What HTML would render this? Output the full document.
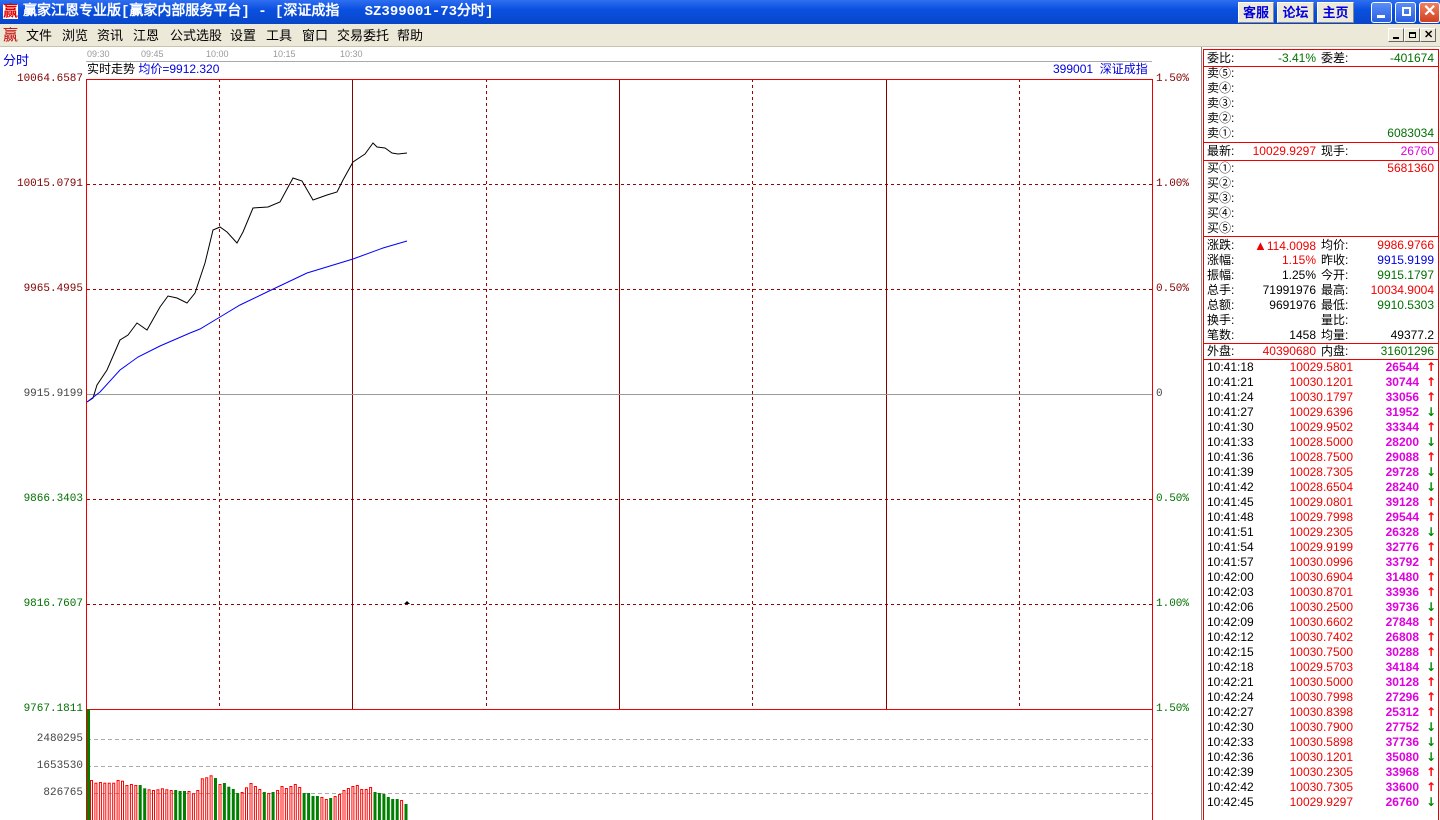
<!DOCTYPE html>
<html><head><meta charset="utf-8">
<style>
*{margin:0;padding:0;box-sizing:border-box}
body{width:1440px;height:820px;overflow:hidden;background:#fff;font-family:"Liberation Sans","WenQuanYi Zen Hei","Noto Sans CJK SC",sans-serif;font-size:12px;position:relative}
.a{position:absolute;white-space:nowrap;line-height:15px}
#title{position:absolute;left:0;top:0;width:1440px;height:24px;background:linear-gradient(#2f6ef0,#0a50e0 40%,#0846c8);color:#fff;font-weight:bold;font-size:14px}
#menu{position:absolute;left:0;top:24px;width:1440px;height:23px;background:#ece9d8;border-bottom:1px solid #c8c4b0}
#menu .a{top:4px;font-size:13px}
.btn{position:absolute;top:2px;height:21px;background:#ece9d8;border:1px solid #fff;border-right-color:#888;border-bottom-color:#888;color:#0000e0;font-size:13px;text-align:center;line-height:19px}
.wb{position:absolute;top:2px;width:21px;height:21px;border:1px solid #fff;border-radius:3px;background:linear-gradient(#5a8ef8,#2a5ee0)}
.sb{position:absolute;top:28px;width:16px;height:14px;background:#ece9d8;border:1px solid #fff;border-right-color:#666;border-bottom-color:#666}
.lab{position:absolute;right:1357px;font-family:"Liberation Mono",monospace;font-size:11px;line-height:12px}
.pct{position:absolute;left:1156px;font-family:"Liberation Mono",monospace;font-size:11px;color:#800000;line-height:12px}
.g{color:#007000}.rd{color:#f00000}.b{color:#0000e0}.m{color:#e000e0}
</style></head><body>
<div id="title">
<span class="a" style="left:3px;top:4px;color:#e00000;font-size:15px;background:#fff;width:15px;height:15px;line-height:15px;text-align:center">赢</span>
<span class="a" style="left:23px;top:4px;line-height:16px;font-family:'Liberation Mono','WenQuanYi Zen Hei',monospace">赢家江恩专业版[赢家内部服务平台] - [深证成指&nbsp;&nbsp;&nbsp;SZ399001-73分时]</span>
<div class="btn" style="left:1238px;width:36px">客服</div>
<div class="btn" style="left:1277px;width:37px">论坛</div>
<div class="btn" style="left:1317px;width:37px">主页</div>
<div class="wb" style="left:1371px"><div style="position:absolute;left:5px;top:12px;width:8px;height:3px;background:#fff"></div></div>
<div class="wb" style="left:1395px"><div style="position:absolute;left:6px;top:4px;width:9px;height:9px;border:2px solid #fff"></div></div>
<div class="wb" style="left:1419px;background:linear-gradient(#f08060,#d04020)"><span class="a" style="left:3px;top:1px;font-size:16px;line-height:16px">✕</span></div>
</div>
<div id="menu">
<span class="a" style="left:3px;color:#c00000;font-size:15px">赢</span>
<span class="a" style="left:26px">文件</span><span class="a" style="left:62px">浏览</span><span class="a" style="left:97px">资讯</span><span class="a" style="left:133px">江恩</span><span class="a" style="left:170px">公式选股</span><span class="a" style="left:230px">设置</span><span class="a" style="left:266px">工具</span><span class="a" style="left:302px">窗口</span><span class="a" style="left:337px">交易委托</span><span class="a" style="left:397px">帮助</span>
</div>
<div class="sb" style="left:1388px;top:28px"><div style="position:absolute;left:4px;top:8px;width:6px;height:2px;background:#000"></div></div>
<div class="sb" style="left:1404px;top:28px"><div style="position:absolute;left:4px;top:3px;width:7px;height:6px;border:1px solid #000;border-top-width:2px"></div></div>
<div class="sb" style="left:1420px;top:28px"><span class="a" style="left:3px;top:-1px;font-weight:bold;font-size:11px">✕</span></div>

<span class="a b" style="left:3px;top:53px;font-size:13px">分时</span>
<span class="a" style="left:87px;top:48px;color:#999;font-size:9px;line-height:12px">09:30</span>
<span class="a" style="left:141px;top:48px;color:#999;font-size:9px;line-height:12px">09:45</span>
<span class="a" style="left:206px;top:48px;color:#999;font-size:9px;line-height:12px">10:00</span>
<span class="a" style="left:273px;top:48px;color:#999;font-size:9px;line-height:12px">10:15</span>
<span class="a" style="left:340px;top:48px;color:#999;font-size:9px;line-height:12px">10:30</span>
<div style="position:absolute;left:86px;top:61px;width:1066px;height:1px;background:#aaa"></div>
<span class="a" style="left:87px;top:62px">实时走势 <span class="b">均价=9912.320</span></span>
<span class="a b" style="left:1053px;top:62px">399001&nbsp;&nbsp;深证成指</span>

<div class="lab" style="top:73px;color:#800000">10064.6587</div>
<div class="lab" style="top:178px;color:#800000">10015.0791</div>
<div class="lab" style="top:283px;color:#800000">9965.4995</div>
<div class="lab" style="top:388px;color:#444">9915.9199</div>
<div class="lab" style="top:493px;color:#007000">9866.3403</div>
<div class="lab" style="top:598px;color:#007000">9816.7607</div>
<div class="lab" style="top:703px;color:#007000">9767.1811</div>
<div class="lab" style="top:733px;color:#444">2480295</div>
<div class="lab" style="top:760px;color:#444">1653530</div>
<div class="lab" style="top:787px;color:#444">826765</div>
<div class="pct" style="top:73px">1.50%</div>
<div class="pct" style="top:178px">1.00%</div>
<div class="pct" style="top:283px">0.50%</div>
<div class="pct" style="top:388px;color:#444">0</div>
<div class="pct" style="top:493px;color:#007000">0.50%</div>
<div class="pct" style="top:598px;color:#007000">1.00%</div>
<div class="pct" style="top:703px;color:#007000">1.50%</div>

<svg style="position:absolute;left:0;top:0" width="1440" height="820">
<g stroke="#900" stroke-dasharray="3,3" stroke-width="1">
<line x1="87" y1="184.5" x2="1152" y2="184.5"/><line x1="87" y1="289.5" x2="1152" y2="289.5"/>
<line x1="87" y1="499.5" x2="1152" y2="499.5"/><line x1="87" y1="604.5" x2="1152" y2="604.5"/>
<line x1="219.5" y1="79" x2="219.5" y2="709"/><line x1="486.5" y1="79" x2="486.5" y2="709"/>
<line x1="752.5" y1="79" x2="752.5" y2="709"/><line x1="1019.5" y1="79" x2="1019.5" y2="709"/>
</g>
<g stroke="#800" stroke-width="1">
<line x1="352.5" y1="79" x2="352.5" y2="709"/><line x1="619.5" y1="79" x2="619.5" y2="709"/><line x1="886.5" y1="79" x2="886.5" y2="709"/>
</g>
<line x1="87" y1="394.5" x2="1152" y2="394.5" stroke="#999"/>
<rect x="86.5" y="79.5" width="1066" height="630" fill="none" stroke="#e00"/>
<line x1="86.5" y1="709" x2="86.5" y2="820" stroke="#e00"/>
<line x1="1152.5" y1="709" x2="1152.5" y2="820" stroke="#e00"/>
<g stroke="#aaa" stroke-dasharray="4,3"><line x1="87" y1="739.5" x2="1152" y2="739.5"/><line x1="87" y1="766.5" x2="1152" y2="766.5"/><line x1="87" y1="793.5" x2="1152" y2="793.5"/></g>
<polyline fill="none" stroke="#000" stroke-width="1" points="87,402 93,398 97,385 107,370 120,340 128,335 137,323 147,330 160,307 168,296 177,298 187,303 195,293 205,263 213,230 220,227 227,232 237,243 243,232 253,208 268,207 280,202 293,178 302,181 313,200 327,195 337,192 343,180 353,162 365,154 373,143 377,147 385,148 392,153 398,154 407,153"/>
<polyline fill="none" stroke="#00f" stroke-width="1" points="87,402 100,392 120,370 138,357 160,346 190,333 200,329 220,317 240,305 267,292 307,273 353,259 383,248 407,241"/>
<path d="M404,604 L407,601 L410,604 Z" fill="#000"/>
<rect x="87" y="709" width="3" height="111" fill="#008000"/>
<g id="vb"></g>
<line x1="1201.5" y1="47" x2="1201.5" y2="820" stroke="#888"/>
<rect x="1203.5" y="49.5" width="235" height="771" fill="none" stroke="#e00"/>
<g stroke="#e00"><line x1="1203" y1="66.5" x2="1439" y2="66.5"/><line x1="1203" y1="142.5" x2="1439" y2="142.5"/><line x1="1203" y1="160.5" x2="1439" y2="160.5"/><line x1="1203" y1="236.5" x2="1439" y2="236.5"/><line x1="1203" y1="343.5" x2="1439" y2="343.5"/><line x1="1203" y1="359.5" x2="1439" y2="359.5"/></g>
</svg>

<div id="rp"></div>
<script>
var tops=[240,248,246,248,248,248,240,242,255,252,255,255,265,268,270,268,265,268,270,270,273,273,273,280,270,235,232,226,234,252,249,260,267,279,276,262,249,258,267,276,279,276,270,258,264,258,252,261,279,279,288,288,291,297,294,288,282,270,264,258,255,267,267,261,276,279,282,291,297,297,300,312];
var gr=[11,12,19,20,21,28,30,31,32,33,39,41,48,49,50,51,54,64,65,66,67,68,69,71];
var s='';for(var i=0;i<tops.length;i++){var x=90+i*4.43,y=700+tops[i]/3,g=gr.indexOf(i)>=0;
s+=g?'<rect x="'+x.toFixed(1)+'" y="'+y.toFixed(1)+'" width="3" height="'+(820-y).toFixed(1)+'" fill="#008000"/>':'<rect x="'+(x+0.5).toFixed(1)+'" y="'+(y+0.5).toFixed(1)+'" width="2" height="'+(820-y).toFixed(1)+'" fill="none" stroke="#f00"/>';}
document.getElementById('vb').innerHTML=s;
function t(x,y,txt,c,al,w){return '<span class="a '+(c||'')+'" style="'+(al?'right:'+(1440-x)+'px':'left:'+x+'px')+';top:'+(y-7)+'px'+(w?';font-weight:bold':'')+'">'+txt+'</span>';}
var h='';
h+=t(1207,58,'委比:')+t(1316,58,'-3.41%','g',1)+t(1321,58,'委差:')+t(1434,58,'-401674','g',1);
['⑤','④','③','②','①'].forEach(function(c,i){h+=t(1207,73+i*15,'卖'+c+':');});
h+=t(1434,133,'6083034','g',1);
h+=t(1207,151,'最新:')+t(1316,151,'10029.9297','rd',1)+t(1321,151,'现手:')+t(1434,151,'26760','m',1);
['①','②','③','④','⑤'].forEach(function(c,i){h+=t(1207,168+i*15,'买'+c+':');});
h+=t(1434,168,'5681360','rd',1);
var st=[['涨跌:','<span style="font-size:13px">▲</span>114.0098','rd','均价:','9986.9766','rd'],['涨幅:','1.15%','rd','昨收:','9915.9199','b'],['振幅:','1.25%','','今开:','9915.1797','g'],['总手:','71991976','','最高:','10034.9004','rd'],['总额:','9691976','','最低:','9910.5303','g'],['换手:','','','量比:','',''],['笔数:','1458','','均量:','49377.2','']];
st.forEach(function(r,i){var y=245+i*15;h+=t(1207,y,r[0])+t(1316,y,r[1],r[2],1)+t(1321,y,r[3])+t(1434,y,r[4],r[5],1);});
h+=t(1207,351,'外盘:')+t(1316,351,'40390680','rd',1)+t(1321,351,'内盘:')+t(1434,351,'31601296','g',1);
var tk=[['10:41:18','10029.5801','26544',1],['10:41:21','10030.1201','30744',1],['10:41:24','10030.1797','33056',1],['10:41:27','10029.6396','31952',0],['10:41:30','10029.9502','33344',1],['10:41:33','10028.5000','28200',0],['10:41:36','10028.7500','29088',1],['10:41:39','10028.7305','29728',0],['10:41:42','10028.6504','28240',0],['10:41:45','10029.0801','39128',1],['10:41:48','10029.7998','29544',1],['10:41:51','10029.2305','26328',0],['10:41:54','10029.9199','32776',1],['10:41:57','10030.0996','33792',1],['10:42:00','10030.6904','31480',1],['10:42:03','10030.8701','33936',1],['10:42:06','10030.2500','39736',0],['10:42:09','10030.6602','27848',1],['10:42:12','10030.7402','26808',1],['10:42:15','10030.7500','30288',1],['10:42:18','10029.5703','34184',0],['10:42:21','10030.5000','30128',1],['10:42:24','10030.7998','27296',1],['10:42:27','10030.8398','25312',1],['10:42:30','10030.7900','27752',0],['10:42:33','10030.5898','37736',0],['10:42:36','10030.1201','35080',0],['10:42:39','10030.2305','33968',1],['10:42:42','10030.7305','33600',1],['10:42:45','10029.9297','26760',0]];
tk.forEach(function(r,i){var y=367+i*15;h+=t(1207,y,r[0])+t(1353,y,r[1],'rd',1)+t(1419,y,r[2],'m',1,1)+'<span class="a" style="left:1426px;top:'+(y-7)+'px;font-weight:bold;font-family:\'DejaVu Sans\',sans-serif;color:'+(r[3]?'#f00':'#080')+'">'+(r[3]?'↑':'↓')+'</span>';});
document.getElementById('rp').innerHTML=h;
</script>
</body></html>
